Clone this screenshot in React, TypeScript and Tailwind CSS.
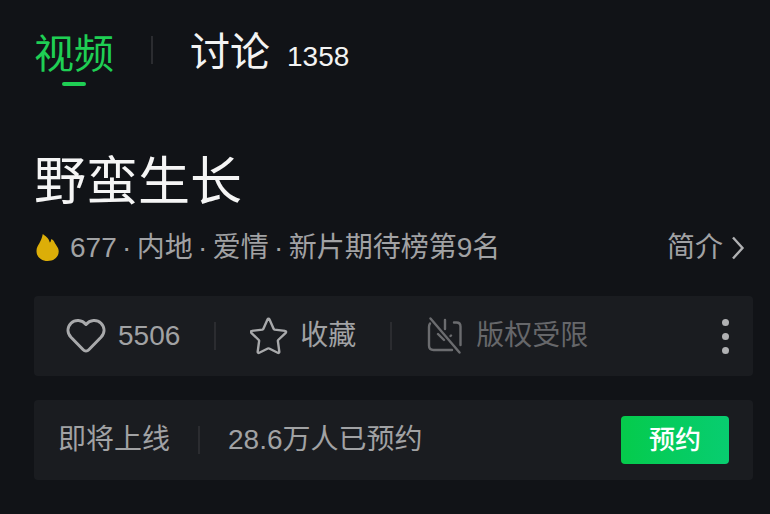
import type { ReactNode } from "react";

const info = ["内地", "爱情", "新片期待榜第9名"];

function Divider() {
  return <span aria-hidden="true" className="h-7 w-0.5 shrink-0 bg-[#2b2c30]" />;
}

function Card({ children }: { children: ReactNode }) {
  return (
    <div className="flex h-20 items-center rounded-sm bg-[#1a1c20]">
      {children}
    </div>
  );
}

function FlameIcon() {
  return (
    <svg viewBox="0 0 26 28" className="h-7 w-[26px]" fill="#dcae08">
      <path d="M8.800 0C11 1.800 15 4 15.800 8.500c1-.6 1.200-1.800 1.200-3.300 1.600.2 2.500 1 3.100 2.300.7 1.500 1.200 2.400 2.300 3.900 1.400 1.900 2.300 3.600 2.300 6C24.700 23 20 27 13.700 27 7.300 27 2.500 23 2.500 17c0-3.300 1.300-5.200 2.600-7.300C6.800 6.900 8 4 8.800 0z" />
    </svg>
  );
}

function HeartIcon() {
  return (
    <svg
      viewBox="0 0 40 36"
      className="h-9 w-10"
      fill="none"
      stroke="#a8a9ab"
      strokeWidth="3"
      strokeLinejoin="round"
    >
      <path d="M20 6.500C16 1.500 9 1.300 5 5.300c-4 4.200-4 9.700 0 14L17.200 31.800c1.600 1.600 4 1.600 5.600 0L35 19.300c4-4.300 4-9.800 0-14C31 1.300 24 1.500 20 6.500z" />
    </svg>
  );
}

function StarIcon() {
  return (
    <svg
      viewBox="0 0 38 38"
      className="size-[38px]"
      fill="none"
      stroke="#a8a9ab"
      strokeWidth="2.400"
      strokeLinejoin="round"
    >
      <path d="M17.600 2.200c.4-.8 1.400-.8 1.800 0l4.300 9.700c.2.400.5.600.9.700l10.500 1.300c1 .1 1.300 1.200.6 1.900l-7.500 7.200c-.3.300-.4.700-.3 1.100l1.400 10.600c.1.900-.8 1.500-1.600 1.100l-8.500-4.300c-.5-.2-.9-.2-1.400 0l-8.500 4.300c-.8.400-1.700-.2-1.600-1.100l1.400-10.600c.1-.4 0-.8-.3-1.100l-7.500-7.200c-.7-.7-.4-1.800.6-1.900l10.500-1.300c.4-.1.700-.3.900-.7z" />
    </svg>
  );
}

function NoDownloadIcon() {
  return (
    <svg
      viewBox="0 0 36 38"
      className="h-[38px] w-9"
      fill="none"
      stroke="#6b6c6f"
      strokeWidth="2.400"
      strokeLinecap="round"
      strokeLinejoin="round"
    >
      <path d="M4 6.500C3.300 7.500 3 8.500 3 10v18.500c0 3 1.500 4.500 4.500 4.500H26" />
      <path d="M28 5.500h2.500c2.500 0 4 1.500 4 4V28" />
      <path d="M19 3v9M12 17l6 6M24.500 19l.5-.5M4.500 1.500l29 34" />
    </svg>
  );
}

export default function App() {
  return (
    <main className="min-h-screen bg-[#111317] pr-[17px] pb-8 pl-[34px] font-['Liberation_Sans','Noto_Sans_CJK_SC',sans-serif] text-[28px] leading-10 text-[#a1a2a4]">
      <nav className="flex items-start pt-6">
        <button className="flex flex-col items-center gap-0.5 pt-1 text-[40px] leading-[52px] text-[#1fcf54]">
          视频
          <span className="h-1 w-6 rounded-xs bg-[#1fcf54]" />
        </button>
        <span className="mx-[37px] flex pt-3">
          <Divider />
        </span>
        <button className="flex items-baseline gap-[17px] pt-0.5 text-[40px] leading-[52px] text-[#f3f3f3]">
          讨论
          <span className="text-[28px]">1358</span>
        </button>
      </nav>

      <h1 className="mt-16 text-[52px] leading-16 text-[#f5f5f5]">野蛮生长</h1>

      <div className="mt-3.5 flex items-center justify-between pr-2">
        <div className="flex items-center">
          <FlameIcon />
          <span className="ml-2.5">677</span>
          {info.map((item) => (
            <span key={item} className="flex">
              <span className="w-5 text-center">·</span>
              {item}
            </span>
          ))}
        </div>
        <a href="#intro" className="flex items-center gap-2">
          简介
          <svg
            viewBox="0 0 14 24"
            className="h-6 w-3.5"
            fill="none"
            stroke="#b0b1b3"
            strokeWidth="2.400"
          >
            <path d="M2 1.500L11.500 12 2 22.500" />
          </svg>
        </a>
      </div>

      <div className="mt-7 flex flex-col gap-6">
        <Card>
          <button className="ml-8 flex items-center gap-3">
            <HeartIcon />
            5506
          </button>
          <span className="mx-[34px] flex">
            <Divider />
          </span>
          <button className="flex items-center gap-3">
            <StarIcon />
            收藏
          </button>
          <span className="mx-[34px] flex">
            <Divider />
          </span>
          <button disabled className="flex items-center gap-3.5 text-[#66676a]">
            <NoDownloadIcon />
            版权受限
          </button>
          <button aria-label="更多" className="mr-6 ml-auto flex flex-col gap-[7px]">
            <span className="size-[7px] rounded-full bg-[#b0b1b3]" />
            <span className="size-[7px] rounded-full bg-[#b0b1b3]" />
            <span className="size-[7px] rounded-full bg-[#b0b1b3]" />
          </button>
        </Card>

        <Card>
          <span className="ml-6">即将上线</span>
          <span className="mx-7 flex">
            <Divider />
          </span>
          <span>28.6万人已预约</span>
          <button className="mr-6 ml-auto h-12 rounded-sm bg-linear-to-r from-[#05cb4b] to-[#08cd70] px-7 text-[26px] font-medium text-white">
            预约
          </button>
        </Card>
      </div>
    </main>
  );
}
